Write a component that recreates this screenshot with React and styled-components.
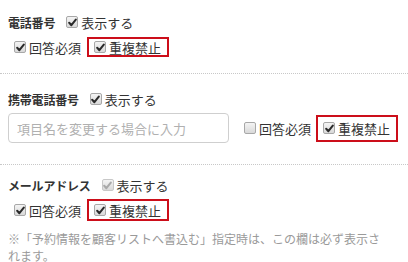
import React from "react";
import styled, { createGlobalStyle } from "styled-components";

const Global = createGlobalStyle`
  html, body {
    margin: 0;
    padding: 0;
    background: #fff;
  }
  body {
    font-family: "Noto Sans CJK JP", "Liberation Sans", sans-serif;
    color: #333;
  }
`;

const Page = styled.div`
  width: 408px;
  height: 262px;
  overflow: hidden;
`;

const Section = styled.section`
  padding: ${(p) => p.$pad || "13px 8px 16px"};
  border-bottom: ${(p) => (p.$last ? "none" : "1px dotted #c8c8c8")};
  display: flex;
  flex-direction: column;
  gap: ${(p) => p.$gap || "6px"};
`;

const Head = styled.div`
  display: flex;
  align-items: center;
  height: 18px;
  gap: 11px;
`;

const Label = styled.span`
  font-size: 12px;
  font-weight: bold;
  color: #333;
  letter-spacing: -0.2px;
`;

const Row = styled.div`
  display: flex;
  align-items: center;
  padding-left: ${(p) => p.$indent || "6px"};
  gap: ${(p) => p.$gap || "2px"};
`;

const Option = styled.label`
  display: inline-flex;
  align-items: center;
  gap: 3px;
  font-size: 13px;
  color: #333;
  line-height: 1;
  white-space: nowrap;
`;

const Box = styled.span`
  width: 12px;
  height: 12px;
  box-sizing: border-box;
  border: 1px solid ${(p) => (p.$dim ? "#c8c8c8" : "#a8a8a8")};
  border-radius: 2px;
  background: linear-gradient(#f4f4f4, #d9d9d9);
  display: inline-flex;
  align-items: center;
  justify-content: center;
  svg {
    display: block;
  }
`;

const Strict = styled.div`
  display: inline-flex;
  align-items: center;
  height: ${(p) => p.$h || "20px"};
  box-sizing: border-box;
  border: 2px solid #cc0e1a;
  padding: 0 6px 0 5px;
  margin-left: ${(p) => p.$ml || "4px"};
`;

const InputRow = styled.div`
  display: flex;
  align-items: center;
  margin-top: 5px;
`;

const NameInput = styled.input`
  width: 221px;
  height: 30px;
  box-sizing: border-box;
  border: 1px solid #cfcfcf;
  border-radius: 4px;
  padding: 0 8px;
  font-family: inherit;
  font-size: 13px;
  color: #333;
  outline: none;
  &::placeholder {
    color: #b0b0b0;
  }
`;

const Note = styled.p`
  margin: 4px 0 0;
  padding-right: 10px;
  font-size: 12px;
  line-height: 17px;
  color: #9a9a9a;
`;

function Check({ checked = true, dim = false }) {
  return (
    <Box $dim={dim}>
      {checked && (
        <svg width="9" height="9" viewBox="0 0 9 9">
          <path
            d="M1.2 4.8 L3.4 7.2 L7.8 1.6"
            fill="none"
            stroke={dim ? "#a9a9a9" : "#2a2a2a"}
            strokeWidth="2"
            strokeLinecap="round"
            strokeLinejoin="round"
          />
        </svg>
      )}
    </Box>
  );
}

function Opt({ text, checked, dim }) {
  return (
    <Option>
      <Check checked={checked} dim={dim} />
      {text}
    </Option>
  );
}

export default function App() {
  return (
    <Page>
      <Global />
      <Section>
        <Head>
          <Label>電話番号</Label>
          <Opt text="表示する" />
        </Head>
        <Row>
          <Opt text="回答必須" />
          <Strict>
            <Opt text="重複禁止" />
          </Strict>
        </Row>
      </Section>

      <Section $pad="16px 8px 21px" $gap="0">
        <Head>
          <Label>携帯電話番号</Label>
          <Opt text="表示する" />
        </Head>
        <InputRow>
          <NameInput placeholder="項目名を変更する場合に入力" />
          <Row $indent="15px">
            <Opt text="回答必須" checked={false} />
            <Strict $h="27px" $ml="3px">
              <Opt text="重複禁止" />
            </Strict>
          </Row>
        </InputRow>
      </Section>

      <Section $pad="11px 8px 0" $gap="5px" $last>
        <Head>
          <Label>メールアドレス</Label>
          <Opt text="表示する" dim />
        </Head>
        <Row>
          <Opt text="回答必須" />
          <Strict $h="22px">
            <Opt text="重複禁止" />
          </Strict>
        </Row>
        <Note>
          ※「予約情報を顧客リストへ書込む」指定時は、この欄は必ず表示されます。
        </Note>
      </Section>
    </Page>
  );
}
